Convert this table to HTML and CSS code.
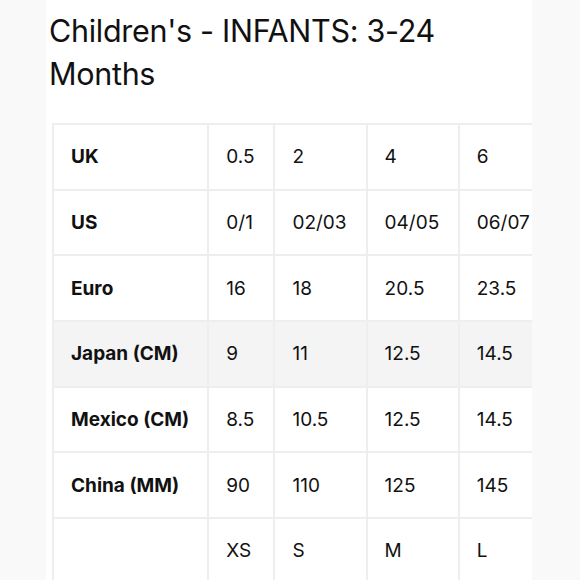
FILE: index.html
```html
<!DOCTYPE html>
<html>
<head>
<meta charset="utf-8">
<link rel="stylesheet" href="styles.css">
</head>
<body>
<div class="page">
  <h1 class="title">Children's - INFANTS: 3-24 Months</h1>
  <div class="table-wrap">
    <table class="sizes">
      <colgroup>
        <col class="c-label"><col class="c-a"><col class="c-b"><col class="c-b"><col class="c-b">
      </colgroup>
      <tr><th>UK</th><td>0.5</td><td>2</td><td>4</td><td>6</td></tr>
      <tr><th>US</th><td>0/1</td><td>02/03</td><td>04/05</td><td>06/07</td></tr>
      <tr><th>Euro</th><td>16</td><td>18</td><td>20.5</td><td>23.5</td></tr>
      <tr class="shade"><th>Japan (CM)</th><td>9</td><td>11</td><td>12.5</td><td>14.5</td></tr>
      <tr><th>Mexico (CM)</th><td>8.5</td><td>10.5</td><td>12.5</td><td>14.5</td></tr>
      <tr><th>China (MM)</th><td>90</td><td>110</td><td>125</td><td>145</td></tr>
      <tr><th></th><td>XS</td><td>S</td><td>M</td><td>L</td></tr>
    </table>
  </div>
</div>
</body>
</html>
```

FILE: styles.css
```css
html, body {
  margin: 0;
  padding: 0;
  background: #f9f9f9;
}
body {
  font-family: "Inter", "Lato", "Liberation Sans", sans-serif;
  color: #111;
}
.page {
  margin-left: 46px;
  width: 486px;
  height: 580px;
  background: #ffffff;
  overflow: hidden;
}
.title {
  margin: 0;
  padding: 9px 0 0 3px;
  width: 440px;
  font-size: 30.5px;
  line-height: 43px;
  font-weight: 400;
  letter-spacing: -0.3px;
  color: #111;
}
.table-wrap {
  margin-top: 28px;
  padding-left: 6px;
}
.sizes {
  border-collapse: collapse;
  table-layout: fixed;
  width: 500px;
}
.c-label { width: 155px; }
.c-a { width: 66px; }
.c-b { width: 92px; }
.sizes th, .sizes td {
  height: 63.7px;
  border: 2px solid #eeeeee;
  padding: 0 0 0 17px;
  text-align: left;
  font-size: 19px;
  font-weight: 400;
  color: #111;
  white-space: nowrap;
}
.sizes th {
  font-weight: 700;
}
.shade th, .shade td {
  background: #f4f4f4;
}
```
